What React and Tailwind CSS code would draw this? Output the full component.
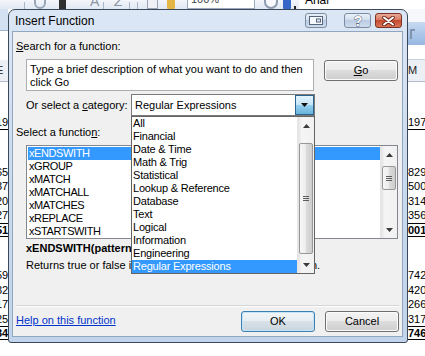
import React from 'react';

const categories = [
  'All',
  'Financial',
  'Date & Time',
  'Math & Trig',
  'Statistical',
  'Lookup & Reference',
  'Database',
  'Text',
  'Logical',
  'Information',
  'Engineering',
  'Regular Expressions',
];

const functionNames = ['xENDSWITH', 'xGROUP', 'xMATCH', 'xMATCHALL', 'xMATCHES', 'xREPLACE', 'xSTARTSWITH'];

// rows of the worksheet peeking out left and right of the dialog
const sheetRows = [
  { h: 'h-[34px]' },
  { h: 'h-[14px] border-b border-black', left: '1969', right: '19706' },
  { h: 'h-[35px]' },
  { h: 'h-[14px]', left: '6512', right: '8295' },
  { h: 'h-[15px]', left: '3711', right: '5009' },
  { h: 'h-[14px]', left: '2045', right: '3144' },
  { h: 'h-[15px]', left: '2798', right: '3568' },
  { h: 'h-[14px] border-y border-black font-bold', left: '5177', right: '0010' },
  { h: 'h-[31px]' },
  { h: 'h-[15px]', left: '5930', right: '7421' },
  { h: 'h-[14px]', left: '3266', right: '4206' },
  { h: 'h-[15px]', left: '1704', right: '2667' },
  { h: 'h-[14px]', left: '2519', right: '3177' },
  { h: 'h-[14px] border-y border-black font-bold', left: '3455', right: '7461' },
];

const SheetCells = ({ side }) =>
  sheetRows.map((row, i) => (
    <div key={i} className={`${row.h} flex items-center whitespace-nowrap text-[11px] leading-none text-black`}>
      {row[side]}
    </div>
  ));

const Arrow = ({ up }) => (
  <svg width="7" height="4" viewBox="0 0 7 4">
    {up ? <path d="M0 4 L3.5 0 L7 4 Z" fill="#3b3b3b" /> : <path d="M0 0 L3.5 4 L7 0 Z" fill="#3b3b3b" />}
  </svg>
);

const Grip = ({ vertical }) => (
  <div className="flex flex-col gap-[1px]">
    <div className="h-[1px] w-[6px] bg-[#5e5e5e]" />
    <div className="h-[1px] w-[6px] bg-[#5e5e5e]" />
    <div className="h-[1px] w-[6px] bg-[#5e5e5e]" />
    {vertical && <div className="h-[1px] w-[6px] bg-[#5e5e5e]" />}
  </div>
);

/**
 * Vista style vertical scrollbar, 17px wide
 */
const ScrollBar = ({ thumbClass }) => (
  <div className="flex w-[17px] shrink-0 flex-col bg-[linear-gradient(90deg,#e3e3e3,#f5f5f5_25%,#f1f1f1)] border-l border-[#e6e6e6]">
    <div className="flex h-[17px] items-center justify-center">
      <Arrow up />
    </div>
    <div className="flex-1 px-[1px]">
      <div
        className={`${thumbClass} flex items-center justify-center rounded-[2px] border border-[#979797] bg-[linear-gradient(90deg,#f7f7f7,#ececec_50%,#dcdcdc_50%,#cdcdcd)]`}
      >
        <Grip />
      </div>
    </div>
    <div className="flex h-[17px] items-center justify-center">
      <Arrow />
    </div>
  </div>
);

const VistaButton = ({ children, focused, className }) => (
  <div
    className={`${className} rounded-[3px] border ${
      focused ? 'border-[#3c7fb1]' : 'border-[#707070]'
    } p-[1px] ${focused ? 'bg-[#c5e4f7]' : 'bg-[#fbfbfb]'}`}
  >
    <div
      className={`flex h-full w-full items-center justify-center rounded-[2px] text-[11px] text-black ${
        focused
          ? 'bg-[linear-gradient(#f1f5f8,#e6ecf0_50%,#d7e1e8_50%,#cbd6de)]'
          : 'bg-[linear-gradient(#f2f2f2,#ebebeb_50%,#dddddd_50%,#cfcfcf)]'
      }`}
    >
      {children}
    </div>
  </div>
);

const TopToolbar = () => (
  <div className="flex h-[9px] items-end overflow-hidden bg-[linear-gradient(#f3f6fb,#e2e9f3)]">
    <div className="ml-[24px] h-[7px] w-[1px] bg-[#a9b4c4]" />
    <div className="ml-[9px] h-[16px] w-[12px] rounded-full border-2 border-[#9aa6b6]" />
    <div className="ml-[13px] h-[12px] w-[7px] bg-[#2f2f2f]" />
    <div className="ml-[24px] h-[16px] text-[14px] leading-[16px] text-[#8d97a6]">A</div>
    <div className="ml-[4px] h-[7px] w-[1px] bg-[#a9b4c4]" />
    <div className="ml-[10px] h-[16px] text-[14px] italic leading-[16px] text-[#8d97a6]">Z</div>
    <div className="ml-[6px] h-[7px] w-[1px] bg-[#a9b4c4]" />
    <div className="ml-[7px] h-[7px] w-[1px] bg-[#a9b4c4]" />
    <div className="ml-[9px] h-[13px] w-[11px] border border-[#98a3b3] bg-[#eef1f5]" />
    <div className="ml-[9px] h-[13px] w-[8px] rounded-[1px] bg-[#e2b746]" />
    <div className="ml-[12px] flex h-[17px] w-[68px] items-end border border-[#9caabd] bg-white px-[3px] text-[11px] leading-[17px] text-[#444]">
      100%
    </div>
    <div className="ml-[9px] h-[16px] w-[14px] rounded-full border-2 border-[#8e9bb0] bg-[#f7f9fc]" />
    <div className="ml-[5px] h-[12px] w-[8px] rounded-[1px] bg-[#3566c8]" />
    <div className="ml-[3px] h-[3px] w-[2px] bg-[#222]" />
    <div className="ml-[3px] flex h-[16px] flex-1 items-end bg-white pl-[6px] text-[12px] leading-[17px] text-black">
      Arial
    </div>
  </div>
);

const Worksheet = () => (
  <div className="flex h-full flex-col bg-white">
    <TopToolbar />
    <div className="flex flex-1">
      {/* left sliver */}
      <div className="flex w-[8px] flex-col overflow-hidden">
        <div className="h-[21px] shrink-0 bg-[#d3e1f2]" />
        <div className="h-[1px] shrink-0 bg-[#9fb2cc]" />
        <div className="h-[29px] shrink-0 bg-white" />
        <div className="flex h-[22px] shrink-0 items-center border-b border-[#b4bccb] bg-[#eceff4] -ml-[4px] text-[11px] text-[#222]">
          E
        </div>
        <div className="-ml-[4px] flex flex-col">
          <SheetCells side="left" />
        </div>
      </div>
      <div className="flex-1" />
      {/* right sliver */}
      <div className="flex w-[18px] flex-col overflow-hidden">
        <div className="h-[13px] shrink-0 bg-[#f6f8fb]" />
        <div className="flex h-[23px] shrink-0 items-center bg-[linear-gradient(#c7daf1,#a9c4e8_60%,#98b7e0)] pl-[3px]">
          <div className="h-[10px] w-[5px] border-l-2 border-t-2 border-[#8193ad]" />
        </div>
        <div className="h-[15px] shrink-0 border-b border-[#c9d2de] bg-white" />
        <div className="flex h-[22px] shrink-0 items-center border-b border-[#b4bccb] bg-[#eceff4] pl-[1px] text-[11px] text-[#222]">
          M
        </div>
        <div className="flex flex-col pl-[1px]">
          <SheetCells side="right" />
        </div>
      </div>
    </div>
  </div>
);

const TitleBar = () => (
  <div className="flex h-[21px] shrink-0 items-start pl-[6px] pr-[5px]">
    <div className="pt-[4px] text-[12px] leading-[14px] text-black">Insert Function</div>
    <div className="flex-1" />
    <div className="mt-[3px] mr-[17px] flex h-[15px] w-[22px] items-center justify-center rounded-[3px] border border-[#7d8ca3] bg-[linear-gradient(#e9f0f8,#d2dfee_45%,#bccde3_50%,#cddbec)]">
      <svg width="14" height="9" viewBox="0 0 14 9">
        <rect x="0.5" y="0.5" width="13" height="8" fill="#f4f7fb" stroke="#56657c" />
        <rect x="7" y="2.5" width="5" height="4" fill="#56657c" />
        <rect x="8" y="3.5" width="3" height="2" fill="#dfe7f1" />
      </svg>
    </div>
    <div className="mt-[3px] flex h-[15px] w-[27px] items-center justify-center rounded-[3px] border border-[#7d8ca3] bg-[linear-gradient(#e9f0f8,#d2dfee_45%,#bccde3_50%,#cddbec)]">
      <svg width="12" height="14" viewBox="0 0 12 14">
        <text
          x="6"
          y="12"
          textAnchor="middle"
          fontFamily="Liberation Sans, Arial, sans-serif"
          fontSize="14"
          fontWeight="bold"
          fill="#ffffff"
          stroke="#5a6a82"
          strokeWidth="1"
          paintOrder="stroke"
        >
          ?
        </text>
      </svg>
    </div>
    <div className="mt-[3px] ml-[4px] flex h-[15px] w-[27px] items-center justify-center rounded-[3px] border border-[#7a3326] bg-[linear-gradient(#eba996,#da7a62_45%,#c74b32_50%,#d77659)]">
      <svg width="13" height="10" viewBox="0 0 13 10">
        <path d="M2 1.5 L11 8.5 M11 1.5 L2 8.5" stroke="#5d2015" strokeWidth="3.6" strokeLinecap="round" />
        <path d="M2 1.5 L11 8.5 M11 1.5 L2 8.5" stroke="#ffffff" strokeWidth="2" strokeLinecap="round" />
      </svg>
    </div>
  </div>
);

const CategoryCombo = () => (
  <div className="relative flex h-[22px] w-[184px] items-center border border-[#7a7a7a] bg-white">
    <div className="flex-1 pl-[3px] text-[11px] text-black">Regular Expressions</div>
    <div className="mr-[0px] flex h-[20px] w-[19px] items-center justify-center border border-[#2c628b] bg-[linear-gradient(#e5f4fc,#c4e5f6_50%,#98d1ef_50%,#68b3db)]">
      <svg width="7" height="4" viewBox="0 0 7 4">
        <path d="M0 0 L3.5 4 L7 0 Z" fill="#0f0f0f" />
      </svg>
    </div>
    {/* open dropdown list */}
    <div className="absolute left-[-1px] top-[21px] z-10 flex h-[158px] w-[184px] border border-[#646464] bg-white">
      <div className="flex flex-1 flex-col">
        {categories.map((c) => (
          <div
            key={c}
            className={`flex h-[13px] items-center pl-[1px] text-[11px] leading-none tracking-[-0.2px] ${
              c === 'Regular Expressions' ? 'bg-[#3399ff] text-white' : 'text-black'
            }`}
          >
            {c}
          </div>
        ))}
      </div>
      <ScrollBar thumbClass="mt-[9px] h-[111px]" />
    </div>
  </div>
);

export default function App() {
  return (
    <div className="relative h-[356px] w-[425px] overflow-hidden bg-white font-['Liberation_Sans',Arial,sans-serif]">
      <Worksheet />

      {/* Insert Function dialog */}
      <div className="absolute left-[8px] top-[9px] flex h-[334px] w-[400px] flex-col rounded-t-[7px] rounded-b-[3px] border border-[#3b4859] bg-[linear-gradient(#dbe7f5,#cddcef_40%,#c1d4eb)]">
        <TitleBar />
        <div className="mb-[5px] ml-[3px] mr-[4px] flex flex-1 flex-col border border-[#92a6c0] bg-[#f0f0f0] px-[3px] pt-[7px] text-[11px] text-black">
          <div className="h-[14px] leading-[14px]">
            <span className="underline">S</span>earch for a function:
          </div>

          <div className="mt-[6px] flex items-start">
            <div className="ml-[10px] h-[32px] w-[288px] border border-[#abadb3] bg-white px-[3px] pt-[3px] leading-[13px]">
              Type a brief description of what you want to do and then click Go
            </div>
            <VistaButton className="ml-[10px] mt-[1px] h-[21px] w-[74px]">
              <span>
                <span className="underline">G</span>o
              </span>
            </VistaButton>
          </div>

          <div className="mt-[3px] flex items-center">
            <div className="ml-[10px] w-[105px] leading-[14px]">
              Or select a <span className="underline">c</span>ategory:
            </div>
            <CategoryCombo />
          </div>

          <div className="mt-[9px] h-[14px] leading-[14px]">
            Select a functio<span className="underline">n</span>:
          </div>

          <div className="ml-[10px] mt-[6px] flex h-[94px] w-[372px] border border-[#828790] bg-white">
            <div className="flex flex-1 flex-col pl-[1px] pt-[1px]">
              {functionNames.map((f, i) => (
                <div
                  key={f}
                  className={`flex h-[13px] items-center pl-[1px] leading-none tracking-[-0.4px] ${
                    i === 0 ? 'bg-[#3399ff] text-white' : 'text-black'
                  }`}
                >
                  {f}
                </div>
              ))}
            </div>
            <ScrollBar thumbClass="mt-[3px] h-[24px]" />
          </div>

          <div className="ml-[10px] mt-[2px] h-[14px] font-bold leading-[14px]">xENDSWITH(pattern,text)</div>
          <div className="ml-[10px] mt-[3px] h-[14px] leading-[14px]">
            Returns true or false if the string ends with the given pattern.
          </div>

          <div className="mt-[33px] h-[1px] bg-[#d5d5d5]" />
          <div className="h-[1px] bg-white" />

          <div className="mt-[4px] flex items-start">
            <div className="mt-[2px] leading-[14px] text-[#0033cc] underline">Help on this function</div>
            <div className="flex-1" />
            <VistaButton focused className="h-[21px] w-[74px]">
              OK
            </VistaButton>
            <VistaButton className="ml-[10px] h-[21px] w-[74px]">Cancel</VistaButton>
          </div>
        </div>
      </div>
    </div>
  );
}
